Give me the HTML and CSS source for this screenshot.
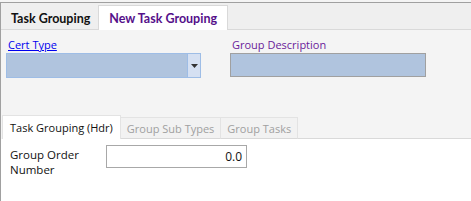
FILE: index.html
```html
<!DOCTYPE html>
<html>
<head>
<meta charset="utf-8">
<link rel="stylesheet" href="styles.css">
</head>
<body>
<div class="frame">
  <div class="tabstrip">
    <div class="tab">Task Grouping</div>
    <div class="tab active">New Task Grouping</div>
    <div class="tabfill"></div>
  </div>
  <div class="content">
    <div class="fields">
      <div class="field f1">
        <a class="label link">Cert Type</a>
        <div class="combo"><div class="combo-val"></div><div class="combo-btn"><svg width="7" height="4" viewBox="0 0 7 4"><path d="M0 0h7L3.5 4z" fill="#333"/></svg></div></div>
      </div>
      <div class="field f2">
        <span class="label purple">Group Description</span>
        <div class="desc"></div>
      </div>
    </div>
    <div class="subtabs">
      <div class="stab active">Task Grouping (Hdr)</div>
      <div class="stab">Group Sub Types</div>
      <div class="stab">Group Tasks</div>
      <div class="stabfill"></div>
    </div>
    <div class="panel">
      <div class="row">
        <div class="rlabel">Group Order<br>Number</div>
        <div class="num">0.0</div>
      </div>
    </div>
  </div>
</div>
</body>
</html>
```
FILE: styles.css
```css
html, body { margin: 0; padding: 0; }
body {
  width: 471px; height: 201px; overflow: hidden;
  background: #f4f4f4;
  font-family: "Open Sans", "Noto Sans", sans-serif;
  font-size: 11px;
}
.frame {
  margin-top: 2px;
  border-top: 1px solid #a0a0a0;
  border-left: 1px solid #a0a0a0;
  height: 198px;
  display: flex; flex-direction: column;
}
.tabstrip { display: flex; height: 27px; background: #efefef; }
.tab {
  font-family: Lato, "Open Sans", sans-serif;
  font-weight: bold; font-size: 12.5px; color: #111;
  padding: 0 8px 0 10px; margin-top: 4px;
  line-height: 23px; border-bottom: 1px solid #d9d9d9;
}
.tab.active {
  background: #fff; color: #55108a;
  margin-top: 2px; line-height: 25px;
  border: 1px solid #d9d9d9; border-bottom: none;
  padding: 0 10px 0 10px;
}
.tabfill { flex: 1; border-bottom: 1px solid #d9d9d9; }
.content { flex: 1; display: flex; flex-direction: column; }
.fields { display: flex; padding: 7px 0 0 5px; height: 79px; box-sizing: border-box; }
.field { display: flex; flex-direction: column; }
.f1 { width: 224px; }
.label { line-height: 15px; margin-left: 2px; margin-bottom: 1px; }
.link { color: #0000ee; text-decoration: underline; }
.purple { color: #6a1b9a; }
.combo {
  width: 195px; height: 25px; box-sizing: border-box;
  border: 1px solid #9ebde6; background: #b0c4de; display: flex;
}
.combo-val { flex: 1; }
.combo-btn {
  width: 12px; background: #d5e0f2; border-left: 1px solid #9ebde6;
  display: flex; align-items: center; justify-content: center;
}
.desc {
  width: 196px; height: 24px; box-sizing: border-box;
  border: 1px solid #a0a0a0; background: #b0c4de;
}
.subtabs { display: flex; margin-top: 6px; height: 24px; margin-left: 1px; }
.stab {
  color: #a0a0a0; line-height: 22px; padding: 0 6px 0 6px;
  margin-top: 2px; border: 1px solid #e3e3e3; border-left: none; border-bottom: 1px solid #d9d9d9;
  background: #f2f2f2; font-size: 11px;
}
.stab.active {
  color: #111; background: #fff; margin-top: 0; line-height: 24px;
  border: 1px solid #e3e3e3; border-bottom: none; padding: 0 7px 0 7px;
}
.stabfill { flex: 1; border-bottom: 1px solid #d9d9d9; }
.panel { flex: 1; background: #fff; }
.row { display: flex; padding: 6px 0 0 9px; }
.rlabel { width: 96px; line-height: 15px; font-size: 11.5px; color: #111; padding-top: 2px; }
.num {
  width: 141px; height: 23px; box-sizing: border-box;
  border: 1px solid #a8a8a8; background: #fff;
  text-align: right; padding-right: 4px; line-height: 21px; font-size: 12px; color: #111;
}
```
